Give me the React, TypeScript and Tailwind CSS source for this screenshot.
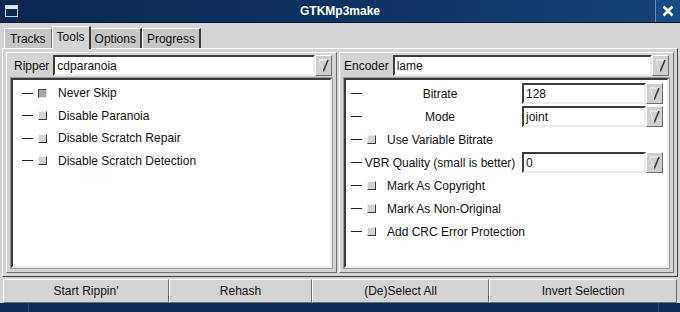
import React from 'react';

const raised = 'border border-t-white border-l-white border-b-[#6e6e6e] border-r-[#6e6e6e]';

const Arrow: React.FC = () => (
  <svg width="11" height="14" viewBox="0 0 11 14">
    <line x1="1" y1="1" x2="10" y2="1" stroke="#f4f4f4" strokeWidth="1.2" />
    <line x1="10" y1="1" x2="5" y2="13" stroke="#3a3a3a" strokeWidth="1.6" />
    <line x1="1" y1="1" x2="5" y2="13" stroke="#ececec" strokeWidth="1" />
  </svg>
);

const Combo: React.FC<{ value: string; className?: string }> = ({ value, className }) => (
  <div className={'flex h-[21px] ' + (className || '')}>
    <div className="flex-1 bg-white border-2 border-t-[#3c3c3c] border-l-[#3c3c3c] border-b-[#eeeeee] border-r-[#eeeeee] flex items-center pl-[2px] leading-none">
      {value}
    </div>
    <div className={'w-[17px] bg-[#cfcfcf] flex items-center justify-center ' + raised}>
      <Arrow />
    </div>
  </div>
);

const Check: React.FC<{ on?: boolean }> = ({ on }) => (
  <div
    className={
      'w-[9px] h-[9px] border ' +
      (on
        ? 'bg-[#a8a8a8] border-t-[#4a4a4a] border-l-[#4a4a4a] border-b-[#e6e6e6] border-r-[#e6e6e6]'
        : 'bg-[#d2d2d2] border-t-[#f2f2f2] border-l-[#f2f2f2] border-b-[#3a3a3a] border-r-[#3a3a3a]')
    }
  />
);

const Dash: React.FC = () => <div className="w-[11px] h-[1px] bg-[#222] shrink-0" />;

const CheckRow: React.FC<{ label: string; on?: boolean; tall?: boolean }> = ({ label, on, tall }) => (
  <div className={'flex items-center ' + (tall ? 'h-[23px]' : 'h-[22.5px]')}>
    <Dash />
    <div className="ml-[5px] mr-[11px]">
      <Check on={on} />
    </div>
    <span>{label}</span>
  </div>
);

const ListBox: React.FC<{ children: React.ReactNode }> = ({ children }) => (
  <div className="flex-1 bg-white border-2 border-t-[#3c3c3c] border-l-[#3c3c3c] border-b-[#ececec] border-r-[#ececec] outline outline-1 outline-[#9a9a9a]">
    {children}
  </div>
);

const App: React.FC = () => {
  return (
    <div className="w-[680px] h-[312px] bg-[#d4d4d4] flex flex-col text-[12px] text-[#111] overflow-hidden" style={{ fontFamily: '"Liberation Sans", Arial, sans-serif' }}>
      {/* title bar */}
      <div className="h-[23px] shrink-0 bg-gradient-to-r from-[#0b2752] via-[#0f3263] to-[#144378] relative flex items-center justify-center border-b border-[#06162e]">
        <div className="absolute left-[5px] top-[5px] w-[13px] h-[12px] border border-[#c8d0dc] bg-[#0b2752] flex flex-col">
          <div className="h-[3px] bg-[#e4e8ee]" />
        </div>
        <span className="text-white font-bold text-[12px]">GTKMp3make</span>
        <div className="absolute right-0 top-0 w-[25px] h-[22px] bg-[#174a85] border-l border-[#6f8db3] flex items-center justify-center">
          <svg width="12" height="12" viewBox="0 0 12 12">
            <path d="M1.5 1.5 L10.5 10.5 M10.5 1.5 L1.5 10.5" stroke="white" strokeWidth="2.6" />
          </svg>
        </div>
      </div>

      {/* tabs */}
      <div className="flex items-end h-[25px] pl-[4px] shrink-0">
        <div className="h-[20px] px-[5px] flex items-center bg-[#c6c6c6] border-t border-l border-white border-r border-r-[#6e6e6e]">Tracks</div>
        <div className="h-[23px] px-[4px] flex items-center bg-[#d4d4d4] border-t border-l border-white border-r-2 border-r-[#3c3c3c] relative top-[1px] pb-[2px]">Tools</div>
        <div className="h-[20px] px-[4px] flex items-center bg-[#c6c6c6] border-t border-white border-r-2 border-r-[#3c3c3c]">Options</div>
        <div className="h-[20px] px-[4px] flex items-center bg-[#c6c6c6] border-t border-l border-white border-r-2 border-r-[#3c3c3c]">Progress</div>
      </div>

      {/* notebook page */}
      <div className="h-[229px] shrink-0 mx-[2px] border border-t-white border-l-white border-b-[#3c3c3c] border-r-[#3c3c3c] flex gap-[2px] p-[3px]">
        <div className={'w-[331px] flex flex-col p-[4px] pt-[2px] ' + raised}>
          <div className="flex items-center h-[21px]">
            <span className="ml-[3px] mr-[4px]">Ripper</span>
            <Combo value="cdparanoia" className="flex-1" />
          </div>
          <div className="mt-[2px] flex-1 flex flex-col">
            <ListBox>
              <div className="pl-[9px] pt-[2px]">
                <CheckRow label="Never Skip" on />
                <CheckRow label="Disable Paranoia" />
                <CheckRow label="Disable Scratch Repair" />
                <CheckRow label="Disable Scratch Detection" />
              </div>
            </ListBox>
          </div>
        </div>

        <div className={'flex-1 flex flex-col p-[4px] pt-[2px] ' + raised}>
          <div className="flex items-center h-[21px]">
            <span className="mr-[4px]">Encoder</span>
            <Combo value="lame" className="flex-1" />
          </div>
          <div className="mt-[2px] flex-1 flex flex-col">
            <ListBox>
              <div className="pl-[5px] pr-[4px] pt-[2px]">
                <div className="flex items-center h-[23px]">
                  <Dash />
                  <span className="w-[156px] mr-[4px] text-center">Bitrate</span>
                  <Combo value="128" className="flex-1" />
                </div>
                <div className="flex items-center h-[23px]">
                  <Dash />
                  <span className="w-[156px] mr-[4px] text-center">Mode</span>
                  <Combo value="joint" className="flex-1" />
                </div>
                <CheckRow label="Use Variable Bitrate" tall />
                <div className="flex items-center h-[23px]">
                  <Dash />
                  <span className="w-[156px] mr-[4px] text-center">VBR Quality (small is better)</span>
                  <Combo value="0" className="flex-1" />
                </div>
                <CheckRow label="Mark As Copyright" tall />
                <CheckRow label="Mark As Non-Original" tall />
                <CheckRow label="Add CRC Error Protection" tall />
              </div>
            </ListBox>
          </div>
        </div>
      </div>

      {/* buttons */}
      <div className="flex h-[24px] mt-[2px] mx-[3px] shrink-0">
        <div className={'w-[166px] flex items-center justify-center ' + raised + ' border-r-[#2a2a2a]'}>Start Rippin'</div>
        <div className={'w-[143px] flex items-center justify-center ' + raised + ' border-r-[#2a2a2a]'}>Rehash</div>
        <div className={'w-[177px] flex items-center justify-center ' + raised + ' border-r-[#2a2a2a]'}>(De)Select All</div>
        <div className={'flex-1 flex items-center justify-center ' + raised}>Invert Selection</div>
      </div>

      {/* taskbar */}
      <div className="flex-1 bg-[#0c2a52] flex">
        <div className="w-[29px] border-r border-[#254a7a]" />
        <div className="flex-1" />
        <div className="w-[22px] border-l border-[#254a7a]" />
      </div>
    </div>
  );
};

export default App;
